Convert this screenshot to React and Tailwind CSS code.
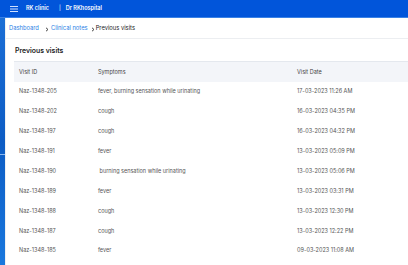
import React from "react";

const rows = [
  ["Naz-1348-205", "fever, burning sensation while urinating", "17-03-2023 11:26 AM"],
  ["Naz-1348-202", "cough", "16-03-2023 04:35 PM"],
  ["Naz-1348-197", "cough", "16-03-2023 04:32 PM"],
  ["Naz-1348-191", "fever", "13-03-2023 05:09 PM"],
  ["Naz-1348-190", " burning sensation while urinating", "13-03-2023 05:06 PM"],
  ["Naz-1348-189", "fever", "13-03-2023 03:31 PM"],
  ["Naz-1348-188", "cough", "13-03-2023 12:30 PM"],
  ["Naz-1348-187", "cough", "13-03-2023 12:22 PM"],
  ["Naz-1348-185", "fever", "09-03-2023 11:08 AM"],
];

function Chevron() {
  return (
    <svg width="4" height="5" viewBox="0 0 4 5" className="mt-[2px]">
      <path d="M1 0.8 L3 2.5 L1 4.2" fill="none" stroke="#333" strokeWidth="0.9" />
    </svg>
  );
}

export default function App() {
  return (
    <div className="w-[408px] h-[265px] overflow-hidden flex flex-col bg-white" style={{ fontFamily: "Inter, 'Noto Sans', sans-serif" }}>
      <header className="h-[18px] shrink-0 bg-[#0155da] border-b border-[#3a82e6] flex items-center pl-[10px] text-white">
        <svg width="8" height="6" viewBox="0 0 8 6" className="mr-[8px]">
          <rect x="0" y="0" width="8" height="1" fill="#cfe0ff" />
          <rect x="0" y="2.5" width="8" height="1" fill="#cfe0ff" />
          <rect x="0" y="5" width="8" height="1" fill="#cfe0ff" />
        </svg>
        <span className="text-[5.5px] font-semibold">RK clinic</span>
        <span className="text-[5.5px] ml-[10px] mr-[5px]">|</span>
        <span className="text-[5.5px] font-semibold">Dr RKhospital</span>
      </header>
      <div className="flex flex-1 min-h-0">
        <aside className="w-[5px] shrink-0 bg-gradient-to-b from-[#1b6ed6] via-[#0d5cc4] to-[#1a78de] relative">
          <div className="absolute left-0 top-[136px] w-[5px] h-[1px] bg-[#8bb8ef]" />
        </aside>
        <main className="flex-1 min-w-0 flex flex-col border-l border-[#eef0f3]">
          <nav className="h-[21px] shrink-0 flex items-center pl-[3px] border-b border-[#eceef1] text-[5.8px]">
            <span className="text-[#2d7fe6]">Dashboard</span>
            <span className="ml-[6px] mr-[2px] flex"><Chevron /></span>
            <span className="text-[#2d7fe6]">Clinical notes</span>
            <span className="ml-[3px] mr-[1px] flex"><Chevron /></span>
            <span className="text-[#222]">Previous visits</span>
          </nav>
          <section className="pl-[8px] pt-[5px]">
            <h2 className="h-[14px] flex items-center pl-[1px] text-[6.9px] font-semibold text-[#222]">Previous visits</h2>
            <table className="w-[420px] border-collapse text-[5.5px] text-[#555] mt-[3px]">
              <thead>
                <tr className="h-[20px] bg-[#f3f5f9] border-t border-[#e4e8ee] text-[#444]">
                  <th className="font-normal text-left pl-[5px] w-[84px]">Visit ID</th>
                  <th className="font-normal text-left w-[199px]">Symptoms</th>
                  <th className="font-normal text-left">Visit Date</th>
                </tr>
              </thead>
              <tbody>
                {rows.map((r) => (
                  <tr key={r[0]} className="h-[19.9px]">
                    <td className="pl-[5px]">{r[0]}</td>
                    <td className="whitespace-pre">{r[1]}</td>
                    <td>{r[2]}</td>
                  </tr>
                ))}
              </tbody>
            </table>
          </section>
        </main>
      </div>
    </div>
  );
}
